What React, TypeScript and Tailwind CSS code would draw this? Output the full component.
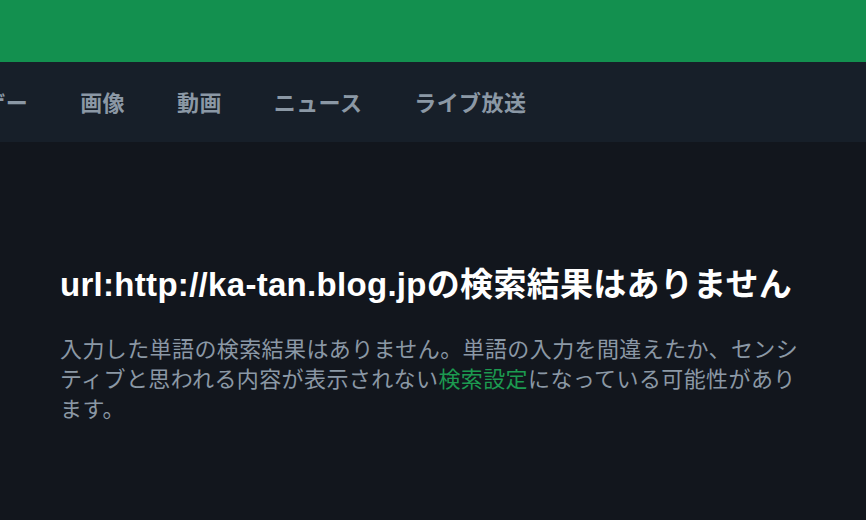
const font = {
  fontFamily: '"Liberation Sans", "Noto Sans CJK JP", sans-serif',
};

const tabs = ["ユーザー", "画像", "動画", "ニュース", "ライブ放送"];

export default function App() {
  return (
    <div className="min-h-[520px] w-full bg-[#12161d]" style={font}>
      <header className="h-[62px] bg-[#13904f]" />
      <nav className="h-[80px] overflow-hidden bg-[#171f29]">
        <ul className="ml-[-87px] flex h-full items-center whitespace-nowrap pt-[3px]">
          {tabs.map((t) => (
            <li
              key={t}
              className="px-[26px] text-[22px] font-bold leading-[30px] tracking-[0.4px] text-[#8b98a5]"
            >
              {t}
            </li>
          ))}
        </ul>
      </nav>
      <main className="px-[60px] pt-[123px]">
        <h1 className="text-[33px] font-bold leading-[40px] tracking-[0.3px] text-white">
          url:http://ka-tan.blog.jpの検索結果はありません
        </h1>
        <p className="mt-[30px] text-[22px] leading-[30px] tracking-[0.4px] text-[#8b98a5]">
          入力した単語の検索結果はありません。単語の入力を間違えたか、センシティブと思われる内容が表示されない
          <a className="text-[#1c9a50]">検索設定</a>
          になっている可能性があります。
        </p>
      </main>
    </div>
  );
}
